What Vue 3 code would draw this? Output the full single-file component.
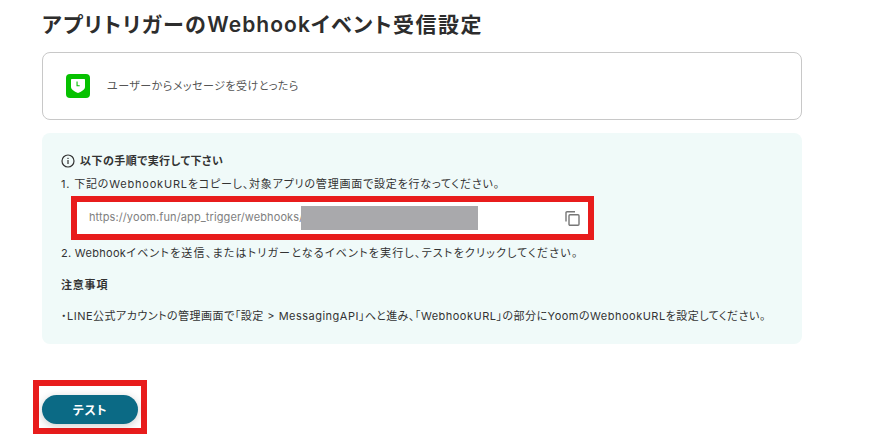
<script setup>
const url = 'https://yoom.fun/app_trigger/webhooks/'
</script>

<template>
  <main class="page">
    <h1 class="title">アプリトリガーの<span class="latin">Webhook</span>イベント受信設定</h1>
    <section class="card">
      <svg class="line" width="24" height="24" viewBox="0 0 24 24">
        <rect width="24" height="24" rx="4" fill="#06c100" />
        <path d="M5 6c0-.6.4-1 1-1h12c.6 0 1 .4 1 1v7c0 2.700-4 4.800-7 6-3-1.200-7-3.300-7-6z" fill="#fff" />
        <path d="M10.500 7.500v4.800h3.200v-1.100h-2.100V7.500z" fill="#06c100" />
      </svg>
      <span class="card-text">ユーザーからメッセージを受けとったら</span>
    </section>
    <section class="panel">
      <div class="heading">
        <svg width="14" height="14" viewBox="0 0 14 14" fill="none">
          <circle cx="7" cy="7" r="6" stroke="#333" stroke-width="1.200" />
          <rect x="6.400" y="6" width="1.200" height="4" fill="#333" />
          <rect x="6.400" y="3.800" width="1.200" height="1.200" fill="#333" />
        </svg>
        <strong>以下の手順で実行して下さい</strong>
      </div>
      <p class="step">1. 下記のWebhookURLをコピーし、対象アプリの管理画面で設定を行なってください。</p>
      <div class="url-frame">
        <div class="url-box">
          <span class="url">{{ url }}</span>
          <span class="mask"></span>
          <svg class="copy" width="15" height="15" viewBox="0 0 15 15" fill="none" stroke="#777" stroke-width="1.400">
            <rect x="4" y="3.700" width="10" height="10.600" rx="1" />
            <path d="M1 10.500V1.700c0-.6.400-1 1-1h8" />
          </svg>
        </div>
      </div>
      <p class="step second"><span class="tight">2. Webhook</span>イベントを送信、またはトリガーとなるイベントを実行し、テストをクリックしてください。</p>
      <p class="notice-title">注意事項</p>
      <p class="notice">・LINE公式アカウントの管理画面で「設定 &gt; MessagingAPI」へと進み、「WebhookURL」の部分にYoomのWebhookURLを設定してください。</p>
    </section>
    <div class="button-frame">
      <button class="test" type="button">テスト</button>
    </div>
  </main>
</template>

<style scoped>
.page {
  width: 886px;
  height: 447px;
  box-sizing: border-box;
  padding: 11px 0 0 42px;
  overflow: hidden;
  background: #fff;
  color: #333;
  font-family: Inter, "Noto Sans CJK JP", sans-serif;
  font-feature-settings: "palt";
  letter-spacing: 0.05em;
}
.title {
  margin: 0;
  font-size: 21px;
  line-height: 28px;
  font-weight: 600;
  color: #2d2d2d;
  letter-spacing: 1.46px;
}
.latin { letter-spacing: 1.05px; }
.card {
  width: 760px;
  height: 68px;
  box-sizing: border-box;
  margin-top: 13px;
  padding-left: 23px;
  display: flex;
  align-items: center;
  gap: 17px;
  border: 1px solid #c8c8c8;
  border-radius: 8px;
}
.line { flex: none; margin-top: -1px; }
.card-text {
  font-size: 11px;
  color: #555;
  margin-top: -2px;
  letter-spacing: 0.49px;
}
.panel {
  width: 760px;
  height: 211px;
  box-sizing: border-box;
  margin-top: 13px;
  padding: 20px 19px 0;
  background: #f0faf9;
  border-radius: 8px;
  font-size: 11px;
  line-height: 16px;
}
.heading {
  display: flex;
  align-items: center;
  gap: 5px;
  height: 16px;
  font-weight: 600;
  letter-spacing: 0.47px;
}
.heading strong { font-weight: 600; }
.step { margin: 7px 0 0; }
.url-frame {
  width: 523px;
  height: 44px;
  box-sizing: border-box;
  margin: 4px 0 0 10px;
  border: 6px solid #e81c1c;
}
.url-box {
  height: 100%;
  display: flex;
  align-items: center;
  padding-left: 12px;
  background: #fff;
}
.url {
  color: #808080;
  white-space: pre;
  width: 212px;
  flex: none;
  letter-spacing: 0.1px;
  margin-top: -2px;
}
.mask {
  width: 177px;
  height: 24px;
  flex: none;
  background: #a9a9ac;
}
.copy { margin-left: 87px; flex: none; margin-top: 1px; }
.second { margin-top: 5px; letter-spacing: 1.19px; }
.tight { letter-spacing: 0.3px; }
.notice-title {
  margin: 16px 0 0;
  font-weight: 600;
}
.notice {
  margin: 15px 0 0;
  letter-spacing: 0.49px;
  white-space: nowrap;
}
.button-frame {
  width: 114px;
  height: 54px;
  box-sizing: border-box;
  margin: 36px 0 0 -9px;
  border: 6px solid #e81c1c;
  padding: 9px 3px 0;
}
.test {
  display: block;
  width: 96px;
  height: 29px;
  padding: 0;
  border: 0;
  border-radius: 15px;
  background: #0b6a85;
  color: #fff;
  font: inherit;
  font-size: 12px;
  font-weight: 700;
  letter-spacing: 0.05em;
  box-shadow: 0 2px 8px rgba(0, 0, 0, 0.2);
}
</style>
